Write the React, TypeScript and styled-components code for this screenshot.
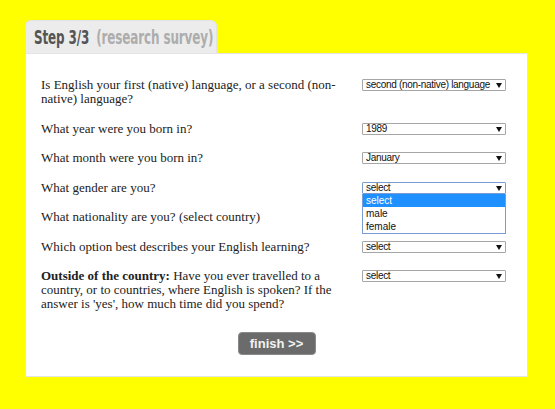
import React from "react";
import styled, { createGlobalStyle } from "styled-components";

const GlobalStyle = createGlobalStyle`
  html, body {
    margin: 0;
    padding: 0;
    background: #ffff00;
  }
  body {
    font-family: "Liberation Serif", "DejaVu Serif", serif;
  }
`;

const Page = styled.div`
  padding: 20px 27px 32px 25px;
`;

const Tab = styled.div`
  display: flex;
  align-items: center;
  width: 192px;
  height: 33px;
  padding: 0 8px;
  background: #ececec;
  border: 1px solid #e2e2e2;
  border-bottom: none;
  border-radius: 6px 6px 0 0;
  box-sizing: border-box;
  overflow: hidden;
`;

/* condensed headline face, squeezed horizontally like Impact */
const TabTitle = styled.div`
  flex: none;
  white-space: nowrap;
  transform: scaleX(0.63);
  transform-origin: left center;
  font-family: "DejaVu Sans", "Liberation Sans", sans-serif;
  font-weight: bold;
  font-size: 19px;
  letter-spacing: -0.2px;
`;

const TabStep = styled.span`
  color: #555;
`;

const TabNote = styled.span`
  margin-left: 11px;
  color: #adadad;
`;

const Panel = styled.div`
  background: #fff;
  border: 1px solid #e4e4e4;
  padding: 24px 21px 21px 15px;
`;

const Row = styled.div`
  display: grid;
  grid-template-columns: 1fr 144px;
  column-gap: 4px;
  margin-bottom: 15.5px;
`;

const Label = styled.div`
  font-size: 13px;
  line-height: 14px;
  color: #222;
`;

const SelectWrap = styled.div`
  position: relative;
  margin-top: 1px;
  height: 12px;
`;

const Select = styled.select<{ $focused?: boolean }>`
  appearance: none;
  -webkit-appearance: none;
  display: block;
  width: 100%;
  height: 12px;
  margin: 0;
  padding: 0 10px 0 3px;
  box-sizing: border-box;
  border: 1px solid ${(p) => (p.$focused ? "#7a9cd3" : "#a6a6a6")};
  border-radius: 1px;
  background: #fff;
  color: #111;
  font-family: "Liberation Sans", Arial, sans-serif;
  font-size: 10px;
  letter-spacing: -0.3px;
  line-height: 10px;
  outline: none;
`;

const Arrow = styled.span`
  position: absolute;
  right: 4px;
  top: 4px;
  width: 0;
  height: 0;
  border-left: 3px solid transparent;
  border-right: 3px solid transparent;
  border-top: 5px solid #111;
  pointer-events: none;
`;

const OptionList = styled.ul`
  position: absolute;
  left: 0;
  right: 0;
  top: 12px;
  margin: 0;
  padding: 0;
  list-style: none;
  background: #fff;
  border: 1px solid #7a9cd3;
  border-top: none;
  z-index: 2;
`;

const OptionItem = styled.li<{ $active?: boolean }>`
  height: 13px;
  padding-left: 3px;
  font-family: "Liberation Sans", Arial, sans-serif;
  font-size: 10px;
  line-height: 13px;
  color: ${(p) => (p.$active ? "#fff" : "#111")};
  background: ${(p) => (p.$active ? "#1e90ff" : "transparent")};
`;

const Actions = styled.div`
  display: flex;
  justify-content: center;
  margin: 0 -21px 0 -15px;
  padding-top: 5px;
`;

const FinishButton = styled.button`
  width: 78px;
  height: 23px;
  padding: 0;
  border: 1px solid #8a8a8a;
  border-radius: 4px;
  background: #6b6b6b;
  color: #f2f2f2;
  font-family: "Liberation Sans", Arial, sans-serif;
  font-weight: bold;
  font-size: 13px;
  cursor: pointer;
`;

type Question = {
  label: React.ReactNode;
  value: string;
  options?: string[];
  open?: boolean;
};

const questions: Question[] = [
  {
    label: "Is English your first (native) language, or a second (non-native) language?",
    value: "second (non-native) language",
  },
  { label: "What year were you born in?", value: "1989" },
  { label: "What month were you born in?", value: "January" },
  { label: "What gender are you?", value: "select", options: ["select", "male", "female"], open: true },
  { label: "What nationality are you? (select country)", value: "select" },
  { label: "Which option best describes your English learning?", value: "select" },
  {
    label: (
      <>
        <b>Outside of the country:</b> Have you ever travelled to a country, or to countries, where
        English is spoken? If the answer is 'yes', how much time did you spend?
      </>
    ),
    value: "select",
  },
];

const DropSelect: React.FC<{ q: Question }> = ({ q }) => {
  const options = q.options ?? [q.value];
  return (
    <SelectWrap>
      <Select $focused={q.open} defaultValue={q.value}>
        {options.map((o) => (
          <option key={o}>{o}</option>
        ))}
      </Select>
      <Arrow />
      {q.open && (
        <OptionList>
          {options.map((o) => (
            <OptionItem key={o} $active={o === q.value}>
              {o}
            </OptionItem>
          ))}
        </OptionList>
      )}
    </SelectWrap>
  );
};

const App: React.FC = () => {
  return (
    <Page>
      <GlobalStyle />
      <Tab>
        <TabTitle>
          <TabStep>Step 3/3</TabStep>
          <TabNote>(research survey)</TabNote>
        </TabTitle>
      </Tab>
      <Panel>
        {questions.map((q, i) => (
          <Row key={i}>
            <Label>{q.label}</Label>
            <DropSelect q={q} />
          </Row>
        ))}
        <Actions>
          <FinishButton>finish &gt;&gt;</FinishButton>
        </Actions>
      </Panel>
    </Page>
  );
};

export default App;
